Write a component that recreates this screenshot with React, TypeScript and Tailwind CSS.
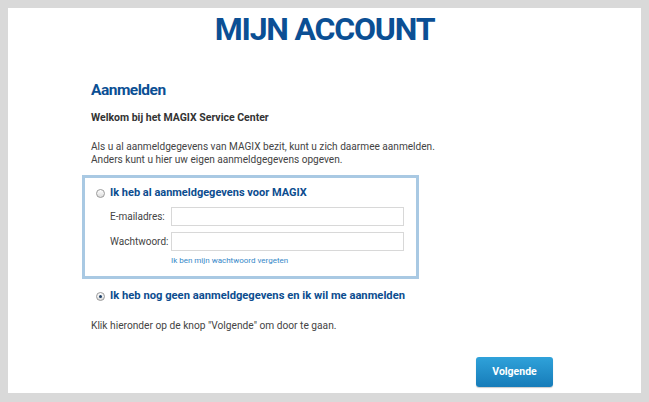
import React from "react"

function Radio({ checked }: { checked?: boolean }) {
  return (
    <span className="relative inline-flex w-[9px] h-[9px] shrink-0 rounded-full border border-[#9a9a9a] bg-gradient-to-b from-white to-[#dcdcdc] items-center justify-center">
      {checked && <span className="w-[3px] h-[3px] rounded-full bg-[#1d3f66]" />}
    </span>
  )
}

export default function App() {
  return (
    <div className="w-[649px] h-[402px] bg-[#d9d9d9] pt-2 pl-2 font-['Roboto',sans-serif]">
      <div className="w-[633px] h-[385px] bg-white">
        <h1 className="pt-[5px] text-center text-[32px] leading-[32px] font-bold text-[#0b4f94] tracking-[-1.2px]">
          MIJN ACCOUNT
        </h1>

        <div className="ml-[83px] w-[462px]">
          <h2 className="mt-[35px] text-[15.5px] leading-[20px] font-bold text-[#0b4f94] tracking-[-0.5px]">Aanmelden</h2>

          <p className="mt-[11px] text-[10.5px] leading-[14px] font-bold text-[#333]">
            Welkom bij het MAGIX Service Center
          </p>

          <p className="mt-[15px] text-[10.1px] leading-[13px] text-[#444]">
            Als u al aanmeldgegevens van MAGIX bezit, kunt u zich daarmee aanmelden.
            <br />
            Anders kunt u hier uw eigen aanmeldgegevens opgeven.
          </p>

          {/* login box */}
          <div className="mt-[9px] -ml-[9px] w-[337px] border-[3px] border-[#a9c9e3] pt-[7px] pb-[9px] pl-[11px]">
            <label className="flex items-center gap-[5px] h-[16px]">
              <Radio />
              <span className="text-[11px] font-bold text-[#0c4d8f]">Ik heb al aanmeldgegevens voor MAGIX</span>
            </label>

            <div className="mt-[6px] flex flex-col gap-[6px] pl-[14px]">
              <div className="flex items-center">
                <span className="w-[61px] text-[10px] text-[#444]">E-mailadres:</span>
                <input className="w-[233px] h-[19px] border border-[#d8d8d8] outline-none" />
              </div>
              <div className="flex items-center">
                <span className="w-[61px] text-[10px] text-[#444]">Wachtwoord:</span>
                <input type="password" className="w-[233px] h-[19px] border border-[#d8d8d8] outline-none" />
              </div>
            </div>

            <a className="block mt-[4px] ml-[75px] text-[8px] leading-[12px] text-[#3688c8]">
              Ik ben mijn wachtwoord vergeten
            </a>
          </div>

          <label className="mt-[9px] ml-[5px] flex items-center gap-[5px] h-[16px]">
            <Radio checked />
            <span className="text-[11.2px] font-bold text-[#0c4d8f]">
              Ik heb nog geen aanmeldgegevens en ik wil me aanmelden
            </span>
          </label>

          <p className="mt-[15px] text-[10.2px] leading-[14px] text-[#444]">
            Klik hieronder op de knop "Volgende" om door te gaan.
          </p>

          <div className="mt-[24px] flex justify-end">
            <button className="w-[77px] h-[30px] rounded-[3px] bg-gradient-to-b from-[#2fa2da] to-[#167cb9] text-white text-[10.5px] font-bold shadow-[0_1px_1px_rgba(0,0,0,0.2)]">
              Volgende
            </button>
          </div>
        </div>
      </div>
    </div>
  )
}
